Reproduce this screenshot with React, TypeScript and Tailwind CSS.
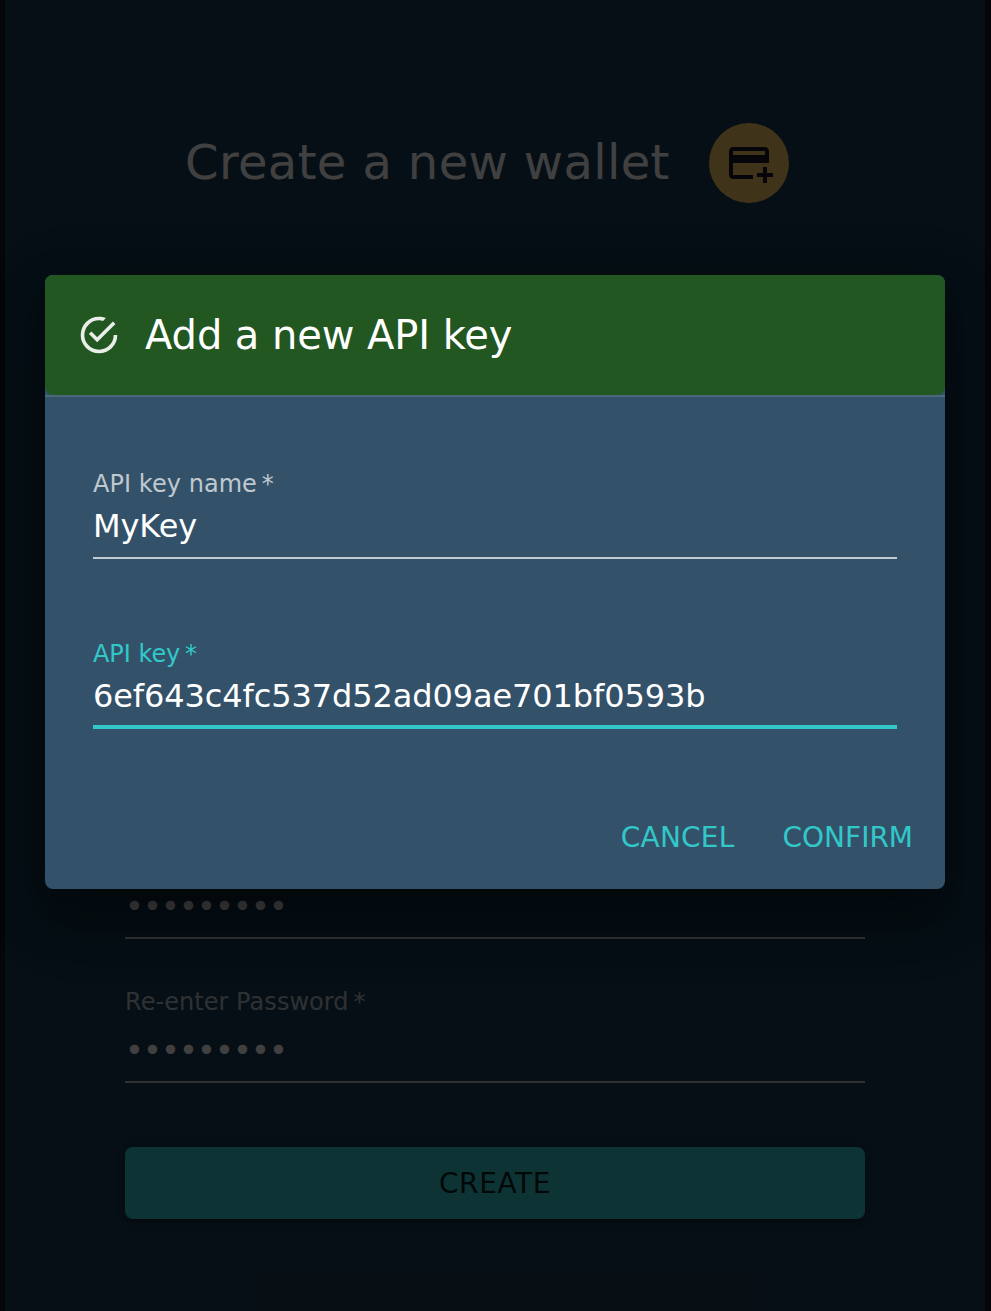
import React from "react";

function AddCardIcon() {
  return (
    <svg viewBox="0 0 24 24" className="h-12 w-12" fill="#14172a">
      <path d="M20 4H4c-1.11 0-1.99.89-1.99 2L2 18c0 1.11.89 2 2 2h10v-2H4v-6h18V6c0-1.11-.89-2-2-2zm0 4H4V6h16v2zm4 9v2h-3v3h-2v-3h-3v-2h3v-3h2v3h3z" />
    </svg>
  );
}

function SuccessIcon() {
  return (
    <svg viewBox="0 0 24 24" className="h-11 w-11 shrink-0 opacity-90" fill="#ffffff">
      <path d="M20,12A8,8 0 0,1 12,20A8,8 0 0,1 4,12A8,8 0 0,1 12,4C12.76,4 13.5,4.11 14.2,4.31L15.77,2.74C14.61,2.26 13.34,2 12,2A10,10 0 0,0 2,12A10,10 0 0,0 12,22A10,10 0 0,0 22,12M7.91,10.08L6.5,11.5L11,16L21,6L19.59,4.58L11,13.17L7.91,10.08Z" />
    </svg>
  );
}

interface FieldProps {
  label: string;
  value: string;
  type?: "text" | "password";
  active?: boolean;
}

function Field({ label, value, type = "text", active = false }: FieldProps) {
  const password = type === "password";
  return (
    <label className={"relative flex flex-col justify-end " + (password ? "h-[98px]" : "h-[92px]")}>
      <span
        className={
          "flex h-[34px] items-center text-[24px] leading-[34px] whitespace-pre " +
          (active ? "tracking-[-0.05px] text-[#32c8c9]" : "tracking-[0.05px] text-white/70")
        }
      >
        {label + "\u2009*"}
      </span>
      <input
        readOnly
        type={type}
        value={value}
        className={
          "w-full bg-transparent text-[32px] leading-[46px] text-white outline-none " +
          (password ? "h-16 pt-2 pb-[10px] tracking-[-0.88px]" : "h-[58px] pt-[2px] pb-[10px] tracking-[-0.1px]")
        }
      />
      <span
        className={
          active
            ? "absolute inset-x-0 bottom-0 h-1 bg-[#32c8c9]"
            : "absolute inset-x-0 bottom-0 h-[2px] bg-white/70"
        }
      />
    </label>
  );
}

function WalletPage() {
  return (
    <div className="flex h-full flex-col bg-[#1a3c55] px-[120px] pt-[123px]">
      <header className="ml-[60px] flex h-20 items-center gap-10">
        <h1 className="w-[484px] pb-[2px] text-[48px] leading-[64px] tracking-[0.38px] whitespace-nowrap text-white">
          Create a new wallet
        </h1>
        <div className="flex h-20 w-20 items-center justify-center rounded-full bg-[#fccb64]">
          <AddCardIcon />
        </div>
      </header>
      <form className="mt-[638px] flex flex-col gap-[46px]">
        <Field label="Password" value="password1" type="password" />
        <Field label="Re-enter Password" value="password1" type="password" />
        <button
          type="button"
          className="mt-[18px] h-[72px] rounded-lg bg-[#34cccd] text-[28px] leading-[49px] tracking-[0.6px] text-black/87 shadow-[0_6px_2px_-4px_rgba(0,0,0,0.2),0_4px_4px_0_rgba(0,0,0,0.14),0_2px_10px_0_rgba(0,0,0,0.12)]"
        >
          CREATE
        </button>
      </form>
    </div>
  );
}

function ApiKeyDialog() {
  return (
    <section
      role="dialog"
      className="h-[614px] w-[900px] rounded-lg bg-[#33526a] shadow-[0_22px_30px_-14px_rgba(0,0,0,0.25),0_32px_60px_4px_rgba(0,0,0,0.2),0_12px_60px_8px_rgba(0,0,0,0.16)]"
    >
      <header className="flex h-[120px] items-center gap-6 rounded-lg bg-[#225722] pl-8">
        <SuccessIcon />
        <h2 className="text-[40px] leading-[64px] tracking-[-0.08px] text-white">Add a new API key</h2>
      </header>
      <div className="h-[2px] bg-white/12" />
      <div className="flex flex-col gap-[78px] px-12 pt-[70px]">
        <Field label="API key name" value="MyKey" />
        <Field label="API key" value="6ef643c4fc537d52ad09ae701bf0593b" active />
      </div>
      <footer className="mt-[72px] flex justify-end gap-4 pr-4 text-[28px] leading-[49px] text-[#32c8c9]">
        <button type="button" className="h-[73px] px-4 tracking-[0.2px]">
          CANCEL
        </button>
        <button type="button" className="h-[73px] px-4 tracking-normal">
          CONFIRM
        </button>
      </footer>
    </section>
  );
}

export default function App() {
  return (
    <main className="relative h-[1311px] w-[991px] overflow-hidden bg-[#14172a] pr-[6px] pl-[5px] font-['DejaVu_Sans',sans-serif]">
      <WalletPage />
      <div className="absolute inset-0 bg-black/75 pt-[275px] pl-[45px]">
        <ApiKeyDialog />
      </div>
    </main>
  );
}
